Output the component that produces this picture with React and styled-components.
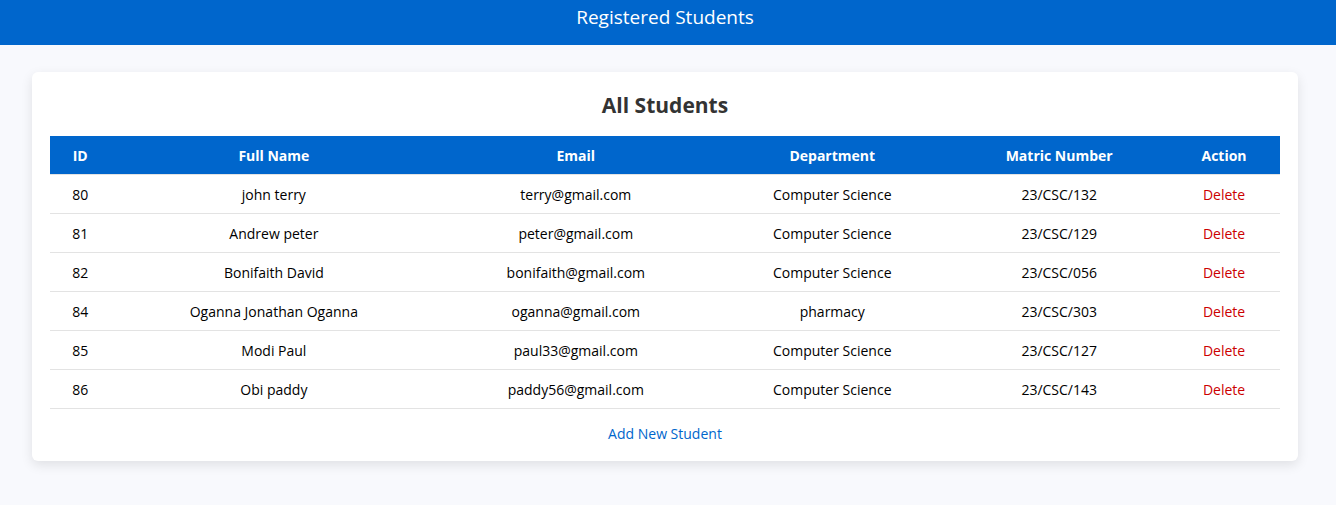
import React from "react";
import styled, { createGlobalStyle } from "styled-components";

const GlobalStyle = createGlobalStyle`
  * { box-sizing: border-box; }
  body {
    margin: 0;
    background: #f8f9fd;
    color: #000;
    font-family: "Segoe UI", "Open Sans", "Noto Sans", sans-serif;
    font-size: 14px;
  }
`;

const TopBar = styled.header`
  background: #0066cc;
  color: #fff;
  padding: 4px 38px 14px 32px;
  text-align: center;
  font-size: 19px;
  line-height: 27px;
`;

const Card = styled.main`
  margin: 27px 38px 44px 32px;
  padding: 18px;
  background: #fff;
  border-radius: 6px;
  box-shadow: 0 4px 12px rgba(0, 0, 0, 0.1);
  text-align: center;
`;

const Title = styled.h2`
  margin: 0 0 16px;
  color: #333;
  font-size: 21px;
  line-height: 30px;
  font-weight: 700;
`;

const Table = styled.table`
  width: 100%;
  border-collapse: collapse;
`;

const HeadCell = styled.th`
  padding: 10px 9px 8px;
  background: #0066cc;
  color: #fff;
  border-bottom: 1px solid #e3e3e3;
  line-height: 20px;
`;

const Cell = styled.td`
  padding: 10px 9px 8px;
  border-bottom: 1px solid #e3e3e3;
  line-height: 20px;
`;

const Column = styled.col`
  width: ${({ $share }) => $share}%;
`;

const TextLink = styled.a`
  color: ${({ $danger }) => ($danger ? "#cc0000" : "#0066cc")};
  text-decoration: none;
  &:hover { text-decoration: underline; }
`;

const Footer = styled.p`
  margin: 16px 0 0;
  line-height: 18px;
`;

const columns = [
  ["ID", 4.9],
  ["Full Name", 26.6],
  ["Email", 22.5],
  ["Department", 19.2],
  ["Matric Number", 17.7],
  ["Action", 9.1],
];

const students = [
  [80, "john terry", "terry@gmail.com", "Computer Science", "23/CSC/132"],
  [81, "Andrew peter", "peter@gmail.com", "Computer Science", "23/CSC/129"],
  [82, "Bonifaith David", "bonifaith@gmail.com", "Computer Science", "23/CSC/056"],
  [84, "Oganna Jonathan Oganna", "oganna@gmail.com", "pharmacy", "23/CSC/303"],
  [85, "Modi Paul", "paul33@gmail.com", "Computer Science", "23/CSC/127"],
  [86, "Obi paddy", "paddy56@gmail.com", "Computer Science", "23/CSC/143"],
];

export default function App() {
  return (
    <>
      <GlobalStyle />
      <TopBar>Registered Students</TopBar>
      <Card>
        <Title>All Students</Title>
        <Table>
          <colgroup>
            {columns.map(([name, share]) => <Column key={name} $share={share} />)}
          </colgroup>
          <thead>
            <tr>{columns.map(([name]) => <HeadCell key={name} scope="col">{name}</HeadCell>)}</tr>
          </thead>
          <tbody>
            {students.map((student) => (
              <tr key={student[0]}>
                {student.map((value, i) => <Cell key={i}>{value}</Cell>)}
                <Cell><TextLink $danger href={`#delete-${student[0]}`}>Delete</TextLink></Cell>
              </tr>
            ))}
          </tbody>
        </Table>
        <Footer><TextLink href="#add">Add New Student</TextLink></Footer>
      </Card>
    </>
  );
}
